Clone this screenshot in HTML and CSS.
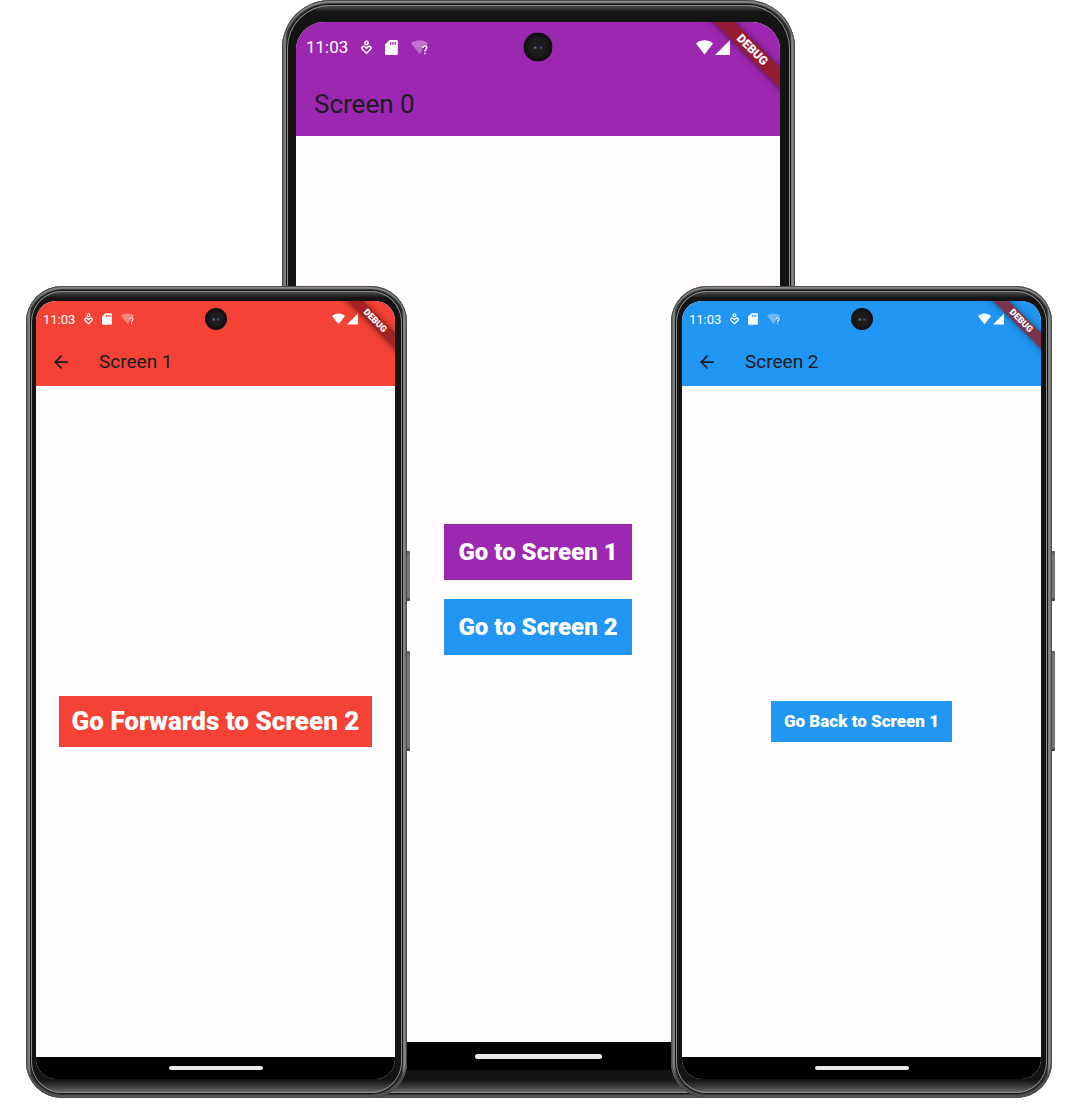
FILE: index.html
```html
<!DOCTYPE html>
<html lang="en">
<head>
<meta charset="utf-8">
<meta name="viewport" content="width=device-width, initial-scale=1">
<title>Screens</title>
<link rel="stylesheet" href="styles.css">
</head>
<body>
<svg class="sprite" aria-hidden="true">
  <symbol id="i-heart" viewBox="0 0 11 14">
    <circle cx="5.5" cy="2.5" r="1.700" fill="none" stroke="currentColor" stroke-width="1.400"/>
    <path d="M5.5 12.800 1.400 8.800C0 7 2.200 4.800 4 6.300l1.500 1.500L7 6.300C8.800 4.800 11 7 9.600 8.800z" fill="none" stroke="currentColor" stroke-width="1.600" stroke-linejoin="round"/>
  </symbol>
  <symbol id="i-sd" viewBox="0 0 13 15">
    <path fill="currentColor" fill-rule="evenodd" d="M4.500 0H11.500A1.300 1.300 0 0 1 12.800 1.300V13.700A1.300 1.300 0 0 1 11.500 15H1.300A1.300 1.300 0 0 1 0 13.700V4.500zM5 2V4.800H6.300V2zM7.300 2V4.800H8.600V2zM9.600 2V4.800H10.900V2z"/>
  </symbol>
  <symbol id="i-wifi-q" viewBox="0 0 17 15">
    <path fill="currentColor" opacity=".35" d="M0 3.200C4.800-.6 12.200-.6 17 3.200L15.500 5.200H11V11L8.500 14z"/>
    <path d="M11.700 8C11.700 5.200 15.800 5.300 15.800 7.800 15.800 9.500 13.800 9.500 13.800 11.500M13.800 12.700V14.200" fill="none" stroke="currentColor" stroke-width="1.400"/>
  </symbol>
  <symbol id="i-wifi" viewBox="0 0 17 15">
    <path fill="currentColor" d="M0 3.500C4.800-.9 12.200-.9 17 3.500L8.500 14.500z"/>
  </symbol>
  <symbol id="i-signal" viewBox="0 0 15 15"><path fill="currentColor" d="M15 0V15H0z"/></symbol>
  <symbol id="i-back" viewBox="0 0 16 16"><path fill="currentColor" d="M16 7H3.830L9.420 1.410 8 0 0 8l8 8 1.410-1.410L3.830 9H16z"/></symbol>
</svg>

<main class="stage">
  <section class="phone phone-large theme-purple">
    <div class="bezel">
      <div class="screen">
        <header class="top">
          <div class="status">
            <span>11:03</span>
            <svg class="ico-heart"><use href="#i-heart"/></svg>
            <svg class="ico-sd"><use href="#i-sd"/></svg>
            <svg class="ico-wifi"><use href="#i-wifi-q"/></svg>
            <span class="radio">
              <svg class="ico-wifi"><use href="#i-wifi"/></svg>
              <svg class="ico-signal"><use href="#i-signal"/></svg>
            </span>
          </div>
          <div class="appbar"><h1>Screen 0</h1></div>
          <span class="camera"></span>
          <span class="banner">DEBUG</span>
        </header>
        <div class="content">
          <button class="btn btn-menu" type="button">Go to Screen 1</button>
          <button class="btn btn-menu btn-blue" type="button">Go to Screen 2</button>
        </div>
        <footer class="nav"><span class="handle"></span></footer>
      </div>
    </div>
  </section>

  <section class="phone phone-left theme-red">
    <span class="key key-power"></span><span class="key key-volume"></span>
    <div class="bezel">
      <div class="screen">
        <header class="top">
          <div class="status">
            <span>11:03</span>
            <svg class="ico-heart"><use href="#i-heart"/></svg>
            <svg class="ico-sd"><use href="#i-sd"/></svg>
            <svg class="ico-wifi"><use href="#i-wifi-q"/></svg>
            <span class="radio">
              <svg class="ico-wifi"><use href="#i-wifi"/></svg>
              <svg class="ico-signal"><use href="#i-signal"/></svg>
            </span>
          </div>
          <div class="appbar">
            <button class="back" type="button" aria-label="Back"><svg><use href="#i-back"/></svg></button>
            <h1>Screen 1</h1>
          </div>
          <span class="camera"></span>
          <span class="banner">DEBUG</span>
        </header>
        <div class="content">
          <button class="btn btn-forward" type="button">Go Forwards to Screen 2</button>
        </div>
        <footer class="nav"><span class="handle"></span></footer>
      </div>
    </div>
  </section>

  <section class="phone phone-right theme-blue">
    <span class="key key-power"></span><span class="key key-volume"></span>
    <div class="bezel">
      <div class="screen">
        <header class="top">
          <div class="status">
            <span>11:03</span>
            <svg class="ico-heart"><use href="#i-heart"/></svg>
            <svg class="ico-sd"><use href="#i-sd"/></svg>
            <svg class="ico-wifi"><use href="#i-wifi-q"/></svg>
            <span class="radio">
              <svg class="ico-wifi"><use href="#i-wifi"/></svg>
              <svg class="ico-signal"><use href="#i-signal"/></svg>
            </span>
          </div>
          <div class="appbar">
            <button class="back" type="button" aria-label="Back"><svg><use href="#i-back"/></svg></button>
            <h1>Screen 2</h1>
          </div>
          <span class="camera"></span>
          <span class="banner">DEBUG</span>
        </header>
        <div class="content">
          <button class="btn btn-return" type="button">Go Back to Screen 1</button>
        </div>
        <footer class="nav"><span class="handle"></span></footer>
      </div>
    </div>
  </section>
</main>
</body>
</html>
```

FILE: styles.css
```css
* { box-sizing: border-box; }

body {
  margin: 0;
  background: #fff;
  font-family: Roboto, "Liberation Sans", sans-serif;
}

.sprite { display: none; }

.stage {
  display: grid;
  grid-template-columns: 26fr 256fr 125fr 264fr 124fr 257fr 28fr;
  grid-template-rows: 286px minmax(600px, 1fr);
  min-height: 100vh;
  padding-bottom: 10px;
}

/* Sizes shared by the two smaller phones */
.phone {
  --radius: 36px;
  --screen-radius: 20px;
  --status-height: 36px;
  --bar-height: 49px;
  --status-size: 13px;
  --title-size: 19px;
  --gap: 9px;
  --heart: 9px;
  --sd: 10px;
  --wifi: 13px;
  --signal: 11px;
  --icon-height: 12px;
  --camera: 22px;
  --banner-size: 9px;
  --banner-height: 11px;
  --banner-shift: 20px;
  --nav-height: 22px;
  --handle-width: 94px;
  --handle-height: 4px;
  position: relative;
  display: flex;
  border-radius: var(--radius);
  padding: 5px;
  background: linear-gradient(90deg, #333 0, #929491 3px, #333 5px, #333 calc(100% - 5px), #929491 calc(100% - 3px), #555 100%);
  box-shadow: inset 0 0 0 1px #4a4c4a, inset 0 2px 1px 1px #858886, inset 0 -2px 1px 1px #555;
}

.phone-left { grid-area: 2 / 2 / 3 / 4; }
.phone-right { grid-area: 2 / 5 / 3 / 7; }

.phone-large {
  --radius: 48px;
  --screen-radius: 28px;
  --status-height: 50px;
  --bar-height: 64px;
  --status-size: 17px;
  --title-size: 26px;
  --gap: 13px;
  --heart: 11px;
  --sd: 13px;
  --wifi: 17px;
  --signal: 15px;
  --icon-height: 15px;
  --camera: 29px;
  --banner-size: 12px;
  --banner-height: 15px;
  --banner-shift: 28px;
  --nav-height: 28px;
  --handle-width: 127px;
  --handle-height: 5px;
  grid-area: 1 / 3 / 3 / 6;
}

.bezel {
  flex: 1;
  display: flex;
  padding: 10px 6px 14px;
  border-radius: calc(var(--radius) - 5px);
  background: linear-gradient(0deg, #777 0, #444 5px, #141414 13px, #141414 calc(100% - 7px), #555 100%);
  box-shadow: inset 0 0 0 1px #8a8c8a, 0 0 0 1px #151515;
}

.phone-left .bezel { padding: 10px 7px 14px 5px; }
.phone-large .bezel { padding: 17px 10px 23px 9px; }

.screen {
  flex: 1;
  display: flex;
  flex-direction: column;
  overflow: hidden;
  border-radius: var(--screen-radius);
  background: #fffbff;
}

.theme-purple { --color: #9c27b0; --banner: #951b35; }
.theme-red { --color: #f44336; --banner: #a52222; }
.theme-blue { --color: #2196f3; --banner: #7d3349; }

.top {
  position: relative;
  overflow: hidden;
  background: var(--color);
}

.status {
  display: flex;
  align-items: center;
  gap: var(--gap);
  height: var(--status-height);
  padding: 0 37px 0 7px;
  color: #fff;
  font-size: var(--status-size);
}

.phone-large .status { padding: 0 50px 0 10px; }

.status svg { height: var(--icon-height); }
.radio { display: flex; gap: 2px; margin-left: auto; }
.ico-heart { width: var(--heart); }
.ico-sd { width: var(--sd); }
.ico-wifi { width: var(--wifi); }
.ico-signal { width: var(--signal); }

.appbar {
  display: flex;
  align-items: center;
  gap: 31px;
  height: var(--bar-height);
  padding: 0 18px;
}

.appbar h1 {
  margin: 0;
  color: #1d1b20;
  font-size: var(--title-size);
  font-weight: 400;
}

.back {
  display: flex;
  padding: 0;
  border: 0;
  background: none;
  color: #1d1b20;
}

.back svg { width: 14px; height: 14px; }

.camera {
  position: absolute;
  top: calc(var(--status-height) / 2);
  left: 50%;
  width: var(--camera);
  height: var(--camera);
  border-radius: 50%;
  translate: -50% -50%;
  background:
    radial-gradient(circle at 40% 52%, #5d8c8c 0, transparent 2px),
    radial-gradient(circle at 60% 52%, #4a55a8 0, transparent 2px),
    radial-gradient(circle, #1c1c1c 40%, #0c0c0c 70%);
}

.banner {
  position: absolute;
  top: var(--banner-shift);
  right: var(--banner-shift);
  width: 140px;
  height: var(--banner-height);
  translate: 50% -50%;
  rotate: 45deg;
  background: var(--banner);
  box-shadow: 0 0 6px rgba(0, 0, 0, .5);
  color: #fff;
  font-size: var(--banner-size);
  font-weight: 900;
  line-height: var(--banner-height);
  text-align: center;
}

.content {
  flex: 1;
  display: flex;
  flex-direction: column;
  align-items: center;
  justify-content: center;
  gap: 19px;
}

.btn {
  border: 0;
  background: var(--color);
  color: #fff;
  font-family: inherit;
  font-weight: 900;
  white-space: nowrap;
}

.btn-menu { padding: 14px; font-size: 24px; line-height: 28px; }
.btn-blue { background: #2196f3; }
.btn-forward { padding: 10px 13px; font-size: 26px; line-height: 31px; }
.btn-return { padding: 10px 13px; font-size: 17px; line-height: 21px; }

.nav {
  display: flex;
  align-items: center;
  justify-content: center;
  height: var(--nav-height);
  background: #000;
}

.handle {
  width: var(--handle-width);
  height: var(--handle-height);
  border-radius: 3px;
  background: #e8e8e8;
}

/* Hardware keys on the right edge */
.key {
  position: absolute;
  left: 100%;
  width: 3px;
  border-radius: 0 1px 1px 0;
  background: linear-gradient(#555 0, #777 4px, #777 calc(100% - 4px), #333 100%);
}

.key-power { top: 265px; height: 50px; }
.key-volume { top: 365px; height: 100px; }
```
